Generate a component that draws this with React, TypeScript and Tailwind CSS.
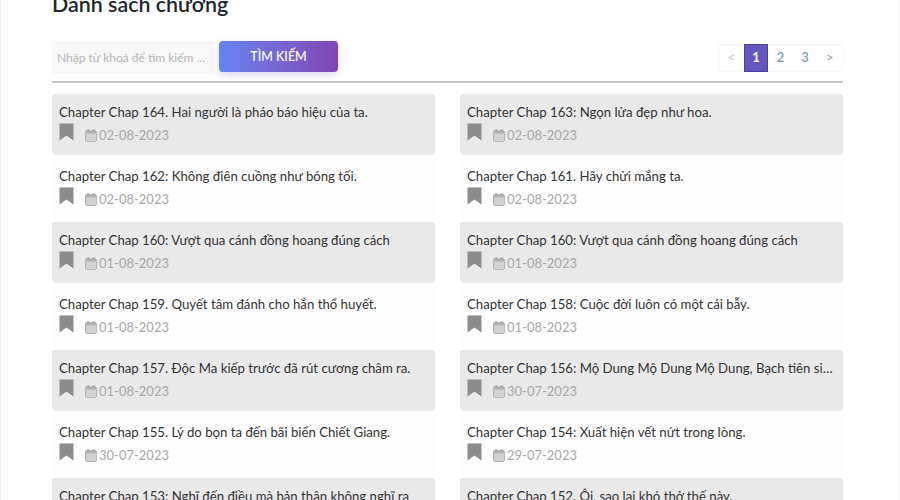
const chapters = [
  { title: "Chapter Chap 164. Hai người là pháo báo hiệu của ta.", date: "02-08-2023" },
  { title: "Chapter Chap 163: Ngọn lửa đẹp như hoa.", date: "02-08-2023" },
  { title: "Chapter Chap 162: Không điên cuồng như bóng tối.", date: "02-08-2023" },
  { title: "Chapter Chap 161. Hãy chửi mắng ta.", date: "02-08-2023" },
  { title: "Chapter Chap 160: Vượt qua cánh đồng hoang đúng cách", date: "01-08-2023" },
  { title: "Chapter Chap 160: Vượt qua cánh đồng hoang đúng cách", date: "01-08-2023" },
  { title: "Chapter Chap 159. Quyết tâm đánh cho hắn thổ huyết.", date: "01-08-2023" },
  { title: "Chapter Chap 158: Cuộc đời luôn có một cái bẫy.", date: "01-08-2023" },
  { title: "Chapter Chap 157. Độc Ma kiếp trước đã rút cương châm ra.", date: "01-08-2023" },
  { title: "Chapter Chap 156: Mộ Dung Mộ Dung Mộ Dung, Bạch tiên sinh tới rồi", date: "30-07-2023" },
  { title: "Chapter Chap 155. Lý do bọn ta đến bãi biển Chiết Giang.", date: "30-07-2023" },
  { title: "Chapter Chap 154: Xuất hiện vết nứt trong lòng.", date: "29-07-2023" },
  { title: "Chapter Chap 153: Nghĩ đến điều mà bản thân không nghĩ ra", date: "29-07-2023" },
  { title: "Chapter Chap 152. Ôi, sao lại khó thở thế này.", date: "29-07-2023" },
];

const Bookmark = () => (
  <svg width="15" height="18" viewBox="0 0 15 18" className="shrink-0">
    <path d="M0.5 0.5H14.5V17.5L7.5 12.5L0.5 17.5Z" fill="#8c8c8c" />
  </svg>
);

const CalendarIcon = () => (
  <svg width="12" height="13" viewBox="0 0 12 13" className="shrink-0">
    <rect x="0.5" y="1.5" width="11" height="11" rx="1.5" fill="#d2d2d2" stroke="#b5b5b5" />
    <rect x="1" y="2" width="10" height="2.5" fill="#b0b0b0" />
    <rect x="2.5" y="0" width="1.5" height="3" fill="#a8a8a8" />
    <rect x="8" y="0" width="1.5" height="3" fill="#a8a8a8" />
  </svg>
);

const ChapterRow = ({ title, date, shaded }: { title: string; date: string; shaded: boolean }) => (
  <div className={`h-[61px] rounded-[3px] px-[7px] pt-[9px] ${shaded ? "bg-[#e9e9e9]" : "bg-[#fdfdfd]"}`}>
    <p className="truncate pr-[2px] text-[13.2px] leading-[19px] text-[#333333]">{title}</p>
    <div className="mt-[1px] flex items-start">
      <Bookmark />
      <span className="ml-[11px] mt-[4px] flex items-center gap-[2px] text-[13px] leading-[17px] text-[#a8a8a8]">
        <CalendarIcon />
        {date}
      </span>
    </div>
  </div>
);

const App = () => {
  return (
    <div
      className="h-[500px] w-[900px] overflow-hidden border-x border-[#eeeeee] bg-white pl-[51px] pr-[56px]"
      style={{ fontFamily: 'Lato, "Noto Sans", sans-serif' }}
    >
      <h2 className="-mt-[10px] text-[21.4px] leading-[28px] font-semibold text-[#22262e]">Danh sách chương</h2>

      <div className="mt-[23px] flex h-[42px] items-start justify-between border-b-2 border-[#c4c4c4]">
        <div className="flex items-start gap-[5px]">
          <div className="flex h-[33px] w-[162px] items-center rounded-[3px] bg-[#f8f8f8] px-[5px] text-[12px] whitespace-nowrap text-[#b4b4b4]">
            Nhập từ khoá để tìm kiếm ...
          </div>
          <button className="h-[31px] w-[119px] rounded-[4px] bg-gradient-to-r from-[#6484f0] to-[#7f45b3] pt-[1px] text-[12.5px] font-medium text-white shadow-[0_3px_8px_rgba(120,90,200,0.25)]">
            TÌM KIẾM
          </button>
        </div>
        <div className="mt-[3px] flex h-[28px] w-[125px] items-center rounded-[3px] border border-[#f5f5f5] text-[13px] text-[#6f8fb0]">
          <span className="flex w-[25px] justify-center text-[#c0c0c0]">&lt;</span>
          <span className="flex h-[28px] w-[25px] items-center justify-center border border-[#4b3fa0] bg-[#6458bf] font-bold text-white">
            1
          </span>
          <span className="flex w-[25px] justify-center">2</span>
          <span className="flex w-[25px] justify-center">3</span>
          <span className="flex w-[25px] justify-center text-[#9a9a9a]">&gt;</span>
        </div>
      </div>

      <div className="mt-[11px] grid grid-cols-2 gap-x-[25px] gap-y-[3px]">
        {chapters.map((chapter, index) => (
          <ChapterRow
            key={index}
            title={chapter.title}
            date={chapter.date}
            shaded={Math.floor(index / 2) % 2 === 0}
          />
        ))}
      </div>
    </div>
  );
};

export default App;
